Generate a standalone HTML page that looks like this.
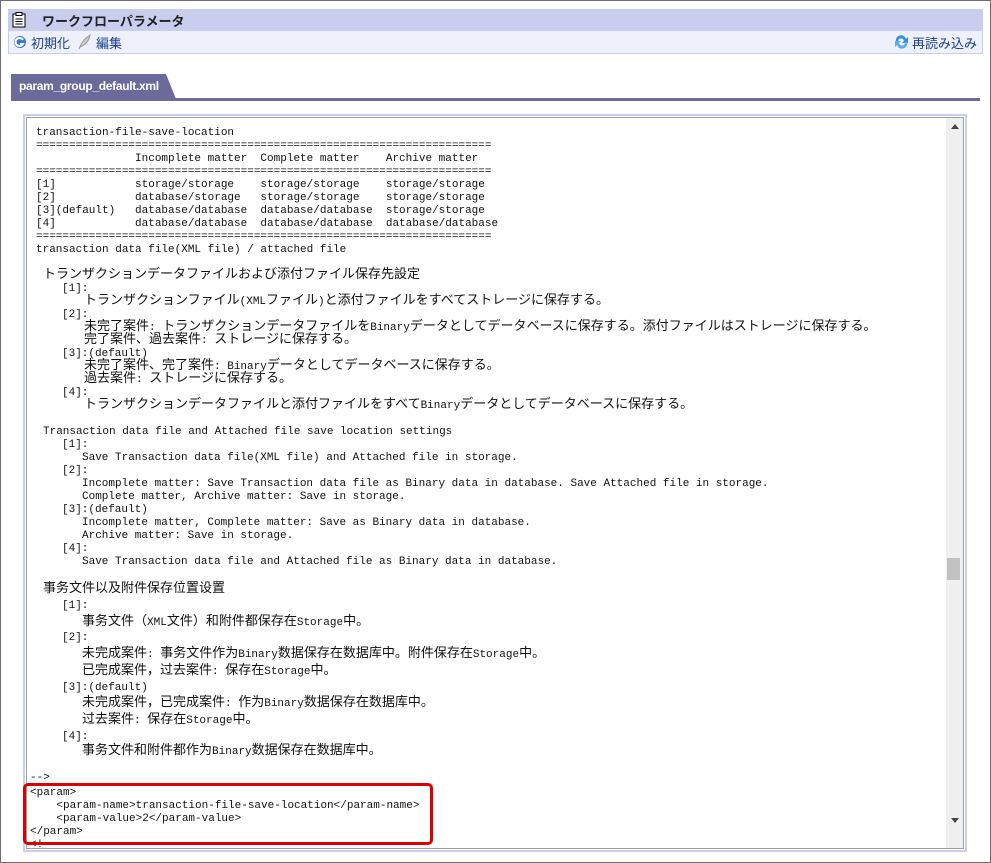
<!DOCTYPE html>
<html><head><meta charset="utf-8">
<style>
body{margin:0;width:991px;height:863px;background:#fff;position:relative;overflow:hidden;font-family:"Liberation Sans","Noto Sans CJK JP",sans-serif}
.frame{position:absolute;left:0;top:0;width:989px;height:861px;border:1px solid #6e6e6e}
.title{position:absolute;left:8px;top:9px;width:975px;height:22px;background:#c9cdee}
.title span{position:absolute;left:34px;top:2px;font-size:13px;color:#222;font-weight:bold}
.tb{position:absolute;left:8px;top:31px;width:973px;height:22px;background:#eef0fb;border:1px solid #c9cdee;border-top:none}
.tb a{position:absolute;top:2px;font-size:13px;color:#1a3f8c}
.tab{position:absolute;left:11px;top:74px;width:165px;height:25px;background:#6b6b9b;clip-path:polygon(0 0,155px 0,165px 25px,0 25px)}
.tab span{position:absolute;left:8px;top:5px;color:#fff;font-size:12px;font-weight:bold;letter-spacing:-0.3px}
.tline{position:absolute;left:11px;top:98px;width:969px;height:3px;background:#6b6b9b}
.ta{position:absolute;left:23px;top:114px;width:940px;height:734px;border:2px solid #c9cdee;background:#fff}
.ta2{position:absolute;left:1px;top:1px;right:1px;bottom:1px;border:1px solid #a0a0a0;overflow:hidden}
.sb{position:absolute;right:0;top:0;width:17px;bottom:0;background:#f0f0f0}
.l{position:absolute;left:5px;white-space:pre;font-family:"Liberation Mono","Noto Sans CJK JP",monospace;font-size:11px;line-height:13px;height:13px;color:#111}
.c{font-family:"Noto Sans CJK SC",monospace;font-size:13px;line-height:1px}
.red{position:absolute;left:23px;top:783px;width:404px;height:56px;border:3px solid #d00;border-radius:5px}
</style></head><body>
<div class="frame"></div>
<div class="title"><svg style="position:absolute;left:4px;top:3px" width="14" height="16"><rect x="1" y="2" width="12" height="13" fill="#fff" stroke="#000"/><rect x="4" y="0.5" width="6" height="3" fill="#fff" stroke="#000"/><path d="M3.5 7h7M3.5 9.5h7M3.5 12h7" stroke="#000"/></svg><span>ワークフローパラメータ</span></div>
<div class="tb">
<svg style="position:absolute;left:4px;top:4px" width="14" height="14"><circle cx="7" cy="7" r="6" fill="#3a78c8"/><path d="M10 5A4 4 0 1 0 10 9H7" stroke="#fff" stroke-width="2" fill="none"/></svg>
<a style="left:22px">初期化</a>
<svg style="position:absolute;left:68px;top:3px" width="14" height="16"><path d="M2 15C4 9 8 4 13 1C12 7 8 11 3 13Z" fill="#c8d0c8" stroke="#999"/></svg>
<a style="left:87px">編集</a>
<svg style="position:absolute;left:885px;top:4px" width="15" height="14"><path d="M2 7A5 5 0 0 1 12 4L14 2V8H8L10 6A3 3 0 0 0 4 7Z" fill="#3a90d8"/><path d="M13 7A5 5 0 0 1 3 10L1 12V6H7L5 8A3 3 0 0 0 11 7Z" fill="#5ab0e8"/></svg>
<a style="left:903px">再読み込み</a>
</div>
<div class="tab"><span>param_group_default.xml</span></div>
<div class="tline"></div>
<div class="ta"><div class="ta2"><div class="sb">
<div style="position:absolute;left:5px;top:6px;width:0;height:0;border-left:4px solid transparent;border-right:4px solid transparent;border-bottom:5px solid #444"></div>
<div style="position:absolute;left:1px;top:440px;width:13px;height:22px;background:#c2c2c2"></div>
<div style="position:absolute;left:5px;top:700px;width:0;height:0;border-left:4px solid transparent;border-right:4px solid transparent;border-top:5px solid #444"></div>
</div></div></div>
<div id="txt">
<div class="l" style="top:127px;left:36px">transaction-file-save-location</div>
<div class="l" style="top:140px;left:36px">=====================================================================</div>
<div class="l" style="top:153px;left:36px">               Incomplete matter  Complete matter    Archive matter</div>
<div class="l" style="top:166px;left:36px">=====================================================================</div>
<div class="l" style="top:179px;left:36px">[1]            storage/storage    storage/storage    storage/storage</div>
<div class="l" style="top:192px;left:36px">[2]            database/storage   storage/storage    storage/storage</div>
<div class="l" style="top:205px;left:36px">[3](default)   database/database  database/database  storage/storage</div>
<div class="l" style="top:218px;left:36px">[4]            database/database  database/database  database/database</div>
<div class="l" style="top:231px;left:36px">=====================================================================</div>
<div class="l" style="top:244px;left:36px">transaction data file(XML file) / attached file</div>
<div class="l" style="top:270px;left:43px">トランザクションデータファイルおよび添付ファイル保存先設定</div>
<div class="l" style="top:283px;left:62px">[1]:</div>
<div class="l" style="top:296px;left:84px">トランザクションファイル(XMLファイル)と添付ファイルをすべてストレージに保存する。</div>
<div class="l" style="top:309px;left:62px">[2]:</div>
<div class="l" style="top:322px;left:84px">未完了案件: トランザクションデータファイルをBinaryデータとしてデータベースに保存する。添付ファイルはストレージに保存する。</div>
<div class="l" style="top:335px;left:84px">完了案件、過去案件: ストレージに保存する。</div>
<div class="l" style="top:348px;left:62px">[3]:(default)</div>
<div class="l" style="top:361px;left:84px">未完了案件、完了案件: Binaryデータとしてデータベースに保存する。</div>
<div class="l" style="top:374px;left:84px">過去案件: ストレージに保存する。</div>
<div class="l" style="top:387px;left:62px">[4]:</div>
<div class="l" style="top:400px;left:84px">トランザクションデータファイルと添付ファイルをすべてBinaryデータとしてデータベースに保存する。</div>
<div class="l" style="top:426px;left:43px">Transaction data file and Attached file save location settings</div>
<div class="l" style="top:439px;left:62px">[1]:</div>
<div class="l" style="top:452px;left:82px">Save Transaction data file(XML file) and Attached file in storage.</div>
<div class="l" style="top:465px;left:62px">[2]:</div>
<div class="l" style="top:478px;left:82px">Incomplete matter: Save Transaction data file as Binary data in database. Save Attached file in storage.</div>
<div class="l" style="top:491px;left:82px">Complete matter, Archive matter: Save in storage.</div>
<div class="l" style="top:504px;left:62px">[3]:(default)</div>
<div class="l" style="top:517px;left:82px">Incomplete matter, Complete matter: Save as Binary data in database.</div>
<div class="l" style="top:530px;left:82px">Archive matter: Save in storage.</div>
<div class="l" style="top:543px;left:62px">[4]:</div>
<div class="l" style="top:556px;left:82px">Save Transaction data file and Attached file as Binary data in database.</div>
<div class="l" style="top:584px;left:43px">事务文件以及附件保存位置设置</div>
<div class="l" style="top:600px;left:62px">[1]:</div>
<div class="l" style="top:617px;left:82px">事务文件（XML文件）和附件都保存在Storage中。</div>
<div class="l" style="top:632px;left:62px">[2]:</div>
<div class="l" style="top:649px;left:82px">未完成案件: 事务文件作为Binary数据保存在数据库中。附件保存在Storage中。</div>
<div class="l" style="top:666px;left:82px">已完成案件，过去案件: 保存在Storage中。</div>
<div class="l" style="top:682px;left:62px">[3]:(default)</div>
<div class="l" style="top:698px;left:82px">未完成案件，已完成案件: 作为Binary数据保存在数据库中。</div>
<div class="l" style="top:715px;left:82px">过去案件: 保存在Storage中。</div>
<div class="l" style="top:731px;left:62px">[4]:</div>
<div class="l" style="top:746px;left:82px">事务文件和附件都作为Binary数据保存在数据库中。</div>
<div class="l" style="top:772px;left:30px">--&gt;</div>
<div class="l" style="top:787px;left:30px">&lt;param&gt;</div>
<div class="l" style="top:800px;left:30px">    &lt;param-name&gt;transaction-file-save-location&lt;/param-name&gt;</div>
<div class="l" style="top:813px;left:30px">    &lt;param-value&gt;2&lt;/param-value&gt;</div>
<div class="l" style="top:826px;left:30px">&lt;/param&gt;</div>
<div class="l" style="top:839px;left:30px;height:8px;overflow:hidden">&lt;!--</div>
</div>
<div class="red"></div>
<script>
document.querySelectorAll('#txt .l').forEach(function(d){
 d.innerHTML=d.innerHTML.replace(/([\u3000-\u30ff\u4e00-\u9fff\uff00-\uffef]+)/g,'<span class="c">$1</span>');
});
</script>
</body></html>
